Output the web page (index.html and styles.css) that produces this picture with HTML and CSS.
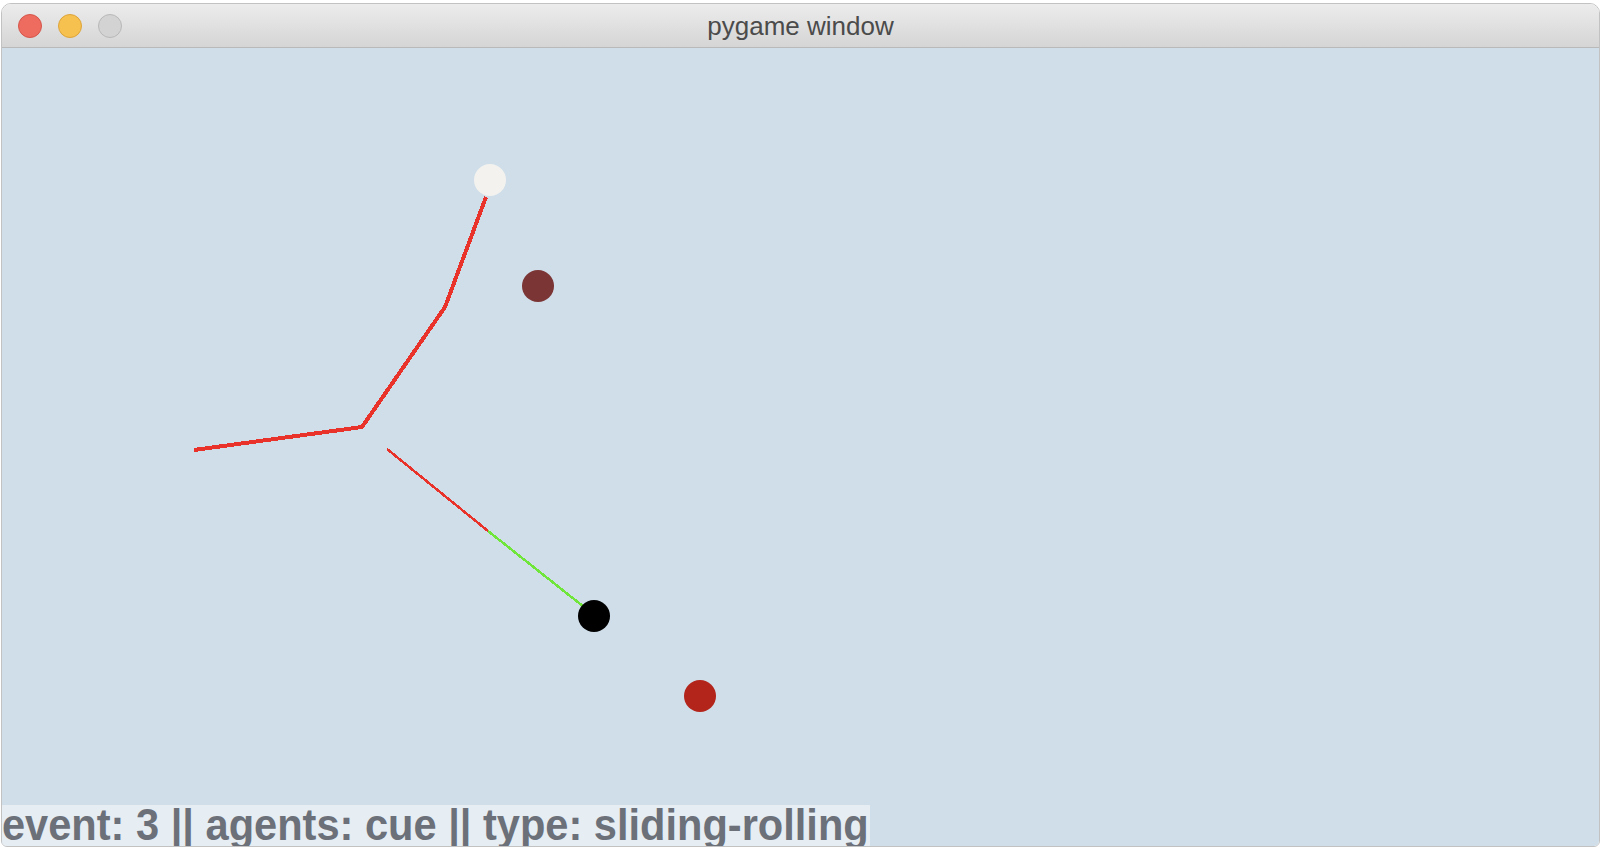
FILE: index.html
```html
<!DOCTYPE html>
<html>
<head>
<meta charset="utf-8">
<title>pygame window</title>
<link rel="stylesheet" href="styles.css">
</head>
<body>
<div class="window">
  <div class="titlebar">
    <div class="lights">
      <span class="light red"></span>
      <span class="light yellow"></span>
      <span class="light grey"></span>
    </div>
    <div class="title">pygame window</div>
    <div class="spacer"></div>
  </div>
  <div class="canvas">
    <svg class="scene" viewBox="2 48 1597 798" preserveAspectRatio="none" xmlns="http://www.w3.org/2000/svg">
      <polyline points="486,197 445,307 362,427 194,450" fill="none" stroke="#e8322a" stroke-width="4" stroke-linejoin="miter"/>
      <line x1="387" y1="449" x2="488" y2="531" stroke="#e8322a" stroke-width="2.5"/>
      <line x1="488" y1="531" x2="584" y2="607" stroke="#70e63a" stroke-width="2.5"/>
      <circle cx="490" cy="180" r="16" fill="#f3f2ee"/>
      <circle cx="538" cy="286" r="16" fill="#7b3535"/>
      <circle cx="594" cy="616" r="16" fill="#000000"/>
      <circle cx="700" cy="696" r="16" fill="#b3241b"/>
    </svg>
    <div class="status"><span class="status-text">event: 3 || agents: cue || type: sliding-rolling</span></div>
  </div>
</div>
</body>
</html>
```
FILE: styles.css
```css
html, body {
  margin: 0;
  padding: 0;
  background: #ffffff;
}

body {
  width: 1602px;
  height: 850px;
  overflow: hidden;
}

.window {
  margin: 3px 2px 3px 1px;
  height: 844px;
  box-sizing: border-box;
  border: 1px solid #c2c2c2;
  border-radius: 10px 10px 6px 6px;
  overflow: hidden;
  display: flex;
  flex-direction: column;
}

.titlebar {
  height: 43px;
  flex: none;
  border-bottom: 1px solid #b9b9b9;
  background: linear-gradient(#ececec, #d5d5d5);
  display: grid;
  grid-template-columns: 1fr auto 1fr;
  align-items: center;
}

.lights {
  display: flex;
  gap: 16px;
  padding-left: 16px;
  padding-top: 1px;
}

.light {
  width: 24px;
  height: 24px;
  border-radius: 50%;
  box-sizing: border-box;
}

.light.red {
  background: #ee6b5f;
  border: 1px solid #d5564b;
}

.light.yellow {
  background: #f6c14f;
  border: 1px solid #dda43a;
}

.light.grey {
  background: #d3d3d3;
  border: 1px solid #b8b8b8;
}

.title {
  font-family: "Liberation Sans", Arial, sans-serif;
  font-size: 26px;
  color: #4b4b4b;
  padding-top: 2px;
}

.canvas {
  flex: 1;
  position: relative;
  background: #cfdee9;
  display: flex;
  flex-direction: column;
  justify-content: flex-end;
  align-items: flex-start;
}

.scene {
  position: absolute;
  left: 0;
  top: 0;
  width: 100%;
  height: 100%;
  shape-rendering: crispEdges;
}

.scene circle {
  shape-rendering: geometricPrecision;
}

.status {
  position: relative;
  background: #e6edf3;
  width: 868px;
  height: 41px;
  overflow: hidden;
}

.status-text {
  display: block;
  color: #6b7079;
  font-family: "Liberation Sans", Arial, sans-serif;
  font-weight: bold;
  font-size: 44px;
  line-height: 40px;
  white-space: nowrap;
  transform: scaleX(0.945);
  transform-origin: left top;
}
```
